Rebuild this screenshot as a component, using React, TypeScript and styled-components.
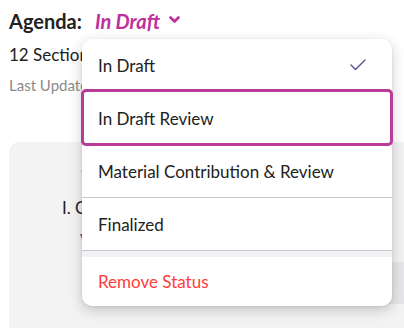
import styled, { createGlobalStyle } from "styled-components";

const GlobalStyle = createGlobalStyle`
  html, body {
    margin: 0;
    padding: 0;
    background: #ffffff;
  }
  body {
    font-family: Lato, "Open Sans", sans-serif;
    color: #222222;
    overflow: hidden;
  }
`;

const MAGENTA = "#c0309c";

type Option = { label: string; checked?: boolean; selected?: boolean };

const options: Option[] = [
  { label: "In Draft", checked: true },
  { label: "In Draft Review", selected: true },
  { label: "Material Contribution & Review" },
  { label: "Finalized" },
];

export default function App() {
  return (
    <>
      <GlobalStyle />
      <Page>
        <Header>
          <Title>Agenda:</Title>
          <StatusButton>
            In Draft
            <svg width="11" height="8" viewBox="0 0 11 8">
              <polyline
                points="1.5,1.5 5.5,5.5 9.5,1.5"
                fill="none"
                stroke={MAGENTA}
                strokeWidth="2.6"
                strokeLinecap="round"
                strokeLinejoin="round"
              />
            </svg>
          </StatusButton>
        </Header>
        <Sections>12 Sections</Sections>
        <Updated>Last Updated 2 days ago</Updated>
        <Card>
          <CardLine $indent={71}>1. Opening</CardLine>
          <CardLine $indent={53}>I. Call to Order</CardLine>
          <SubLink>View details</SubLink>
          <CardBand />
        </Card>

        <Menu>
          {options.map((o) => (
            <Item key={o.label} $selected={o.selected}>
              <span>{o.label}</span>
              {o.checked && (
                <svg width="16" height="12" viewBox="0 0 16 12">
                  <polyline
                    points="1,6 5.5,10.5 15,1"
                    fill="none"
                    stroke="#5a4c93"
                    strokeWidth="1.4"
                    strokeLinecap="round"
                    strokeLinejoin="round"
                  />
                </svg>
              )}
            </Item>
          ))}
          <Gap />
          <DangerItem>Remove Status</DangerItem>
        </Menu>
      </Page>
    </>
  );
}

const Page = styled.div`
  position: relative;
  width: 404px;
  height: 328px;
  padding: 8px 0 0 9px;
  box-sizing: border-box;
  overflow: hidden;
`;

const Header = styled.div`
  display: flex;
  align-items: center;
  gap: 13px;
  height: 26px;
`;

const Title = styled.h1`
  margin: 0;
  font-size: 20px;
  font-weight: 700;
  color: #222222;
`;

const StatusButton = styled.button`
  display: flex;
  align-items: center;
  gap: 9px;
  padding: 0;
  border: none;
  background: none;
  font-family: Lato, sans-serif;
  font-size: 20px;
  font-weight: 700;
  font-style: italic;
  color: ${MAGENTA};
  svg {
    margin-top: -3px;
  }
`;

const Sections = styled.div`
  margin-top: 10px;
  font-size: 17px;
  color: #222222;
`;

const Updated = styled.div`
  margin-top: 11px;
  font-size: 15px;
  color: #8a8a8a;
`;

const Card = styled.div`
  margin-top: 48px;
  width: 395px;
  height: 200px;
  border-radius: 10px 0 0 0;
  background: #f3f3f4;
  padding-top: 16px;
  box-sizing: border-box;
`;

const CardLine = styled.div<{ $indent: number }>`
  padding-left: ${(p) => p.$indent}px;
  font-size: 17px;
  line-height: 33px;
  color: #222222;
`;

const SubLink = styled.div`
  padding-left: 71px;
  font-size: 15px;
  line-height: 30px;
  color: #5a4c93;
`;

const CardBand = styled.div`
  margin: 8px 0 0 240px;
  height: 42px;
  background: #e7e7e9;
`;

const Menu = styled.div`
  position: absolute;
  left: 82px;
  top: 39px;
  width: 310px;
  background: #ffffff;
  border-radius: 10px;
  box-shadow: 0 4px 14px rgba(0, 0, 0, 0.2), 0 1px 3px rgba(0, 0, 0, 0.08);
  display: flex;
  flex-direction: column;
`;

const Item = styled.div<{ $selected?: boolean }>`
  position: relative;
  display: flex;
  align-items: center;
  justify-content: space-between;
  height: 53px;
  padding: 0 26px 0 16px;
  box-sizing: border-box;
  border-bottom: 1px solid #c9c9cd;
  font-size: 17px;
  color: #222222;
  &::after {
    content: "";
    display: ${(p) => (p.$selected ? "block" : "none")};
    position: absolute;
    top: -3px;
    bottom: -2px;
    left: -1px;
    right: -1px;
    border: 3px solid #bb3c98;
    border-radius: 5px;
  }
`;

const Gap = styled.div`
  height: 6px;
  background: #f2f2f6;
`;

const DangerItem = styled.div`
  display: flex;
  align-items: center;
  height: 49px;
  padding: 0 16px;
  font-size: 17px;
  color: #ff3b3b;
`;
